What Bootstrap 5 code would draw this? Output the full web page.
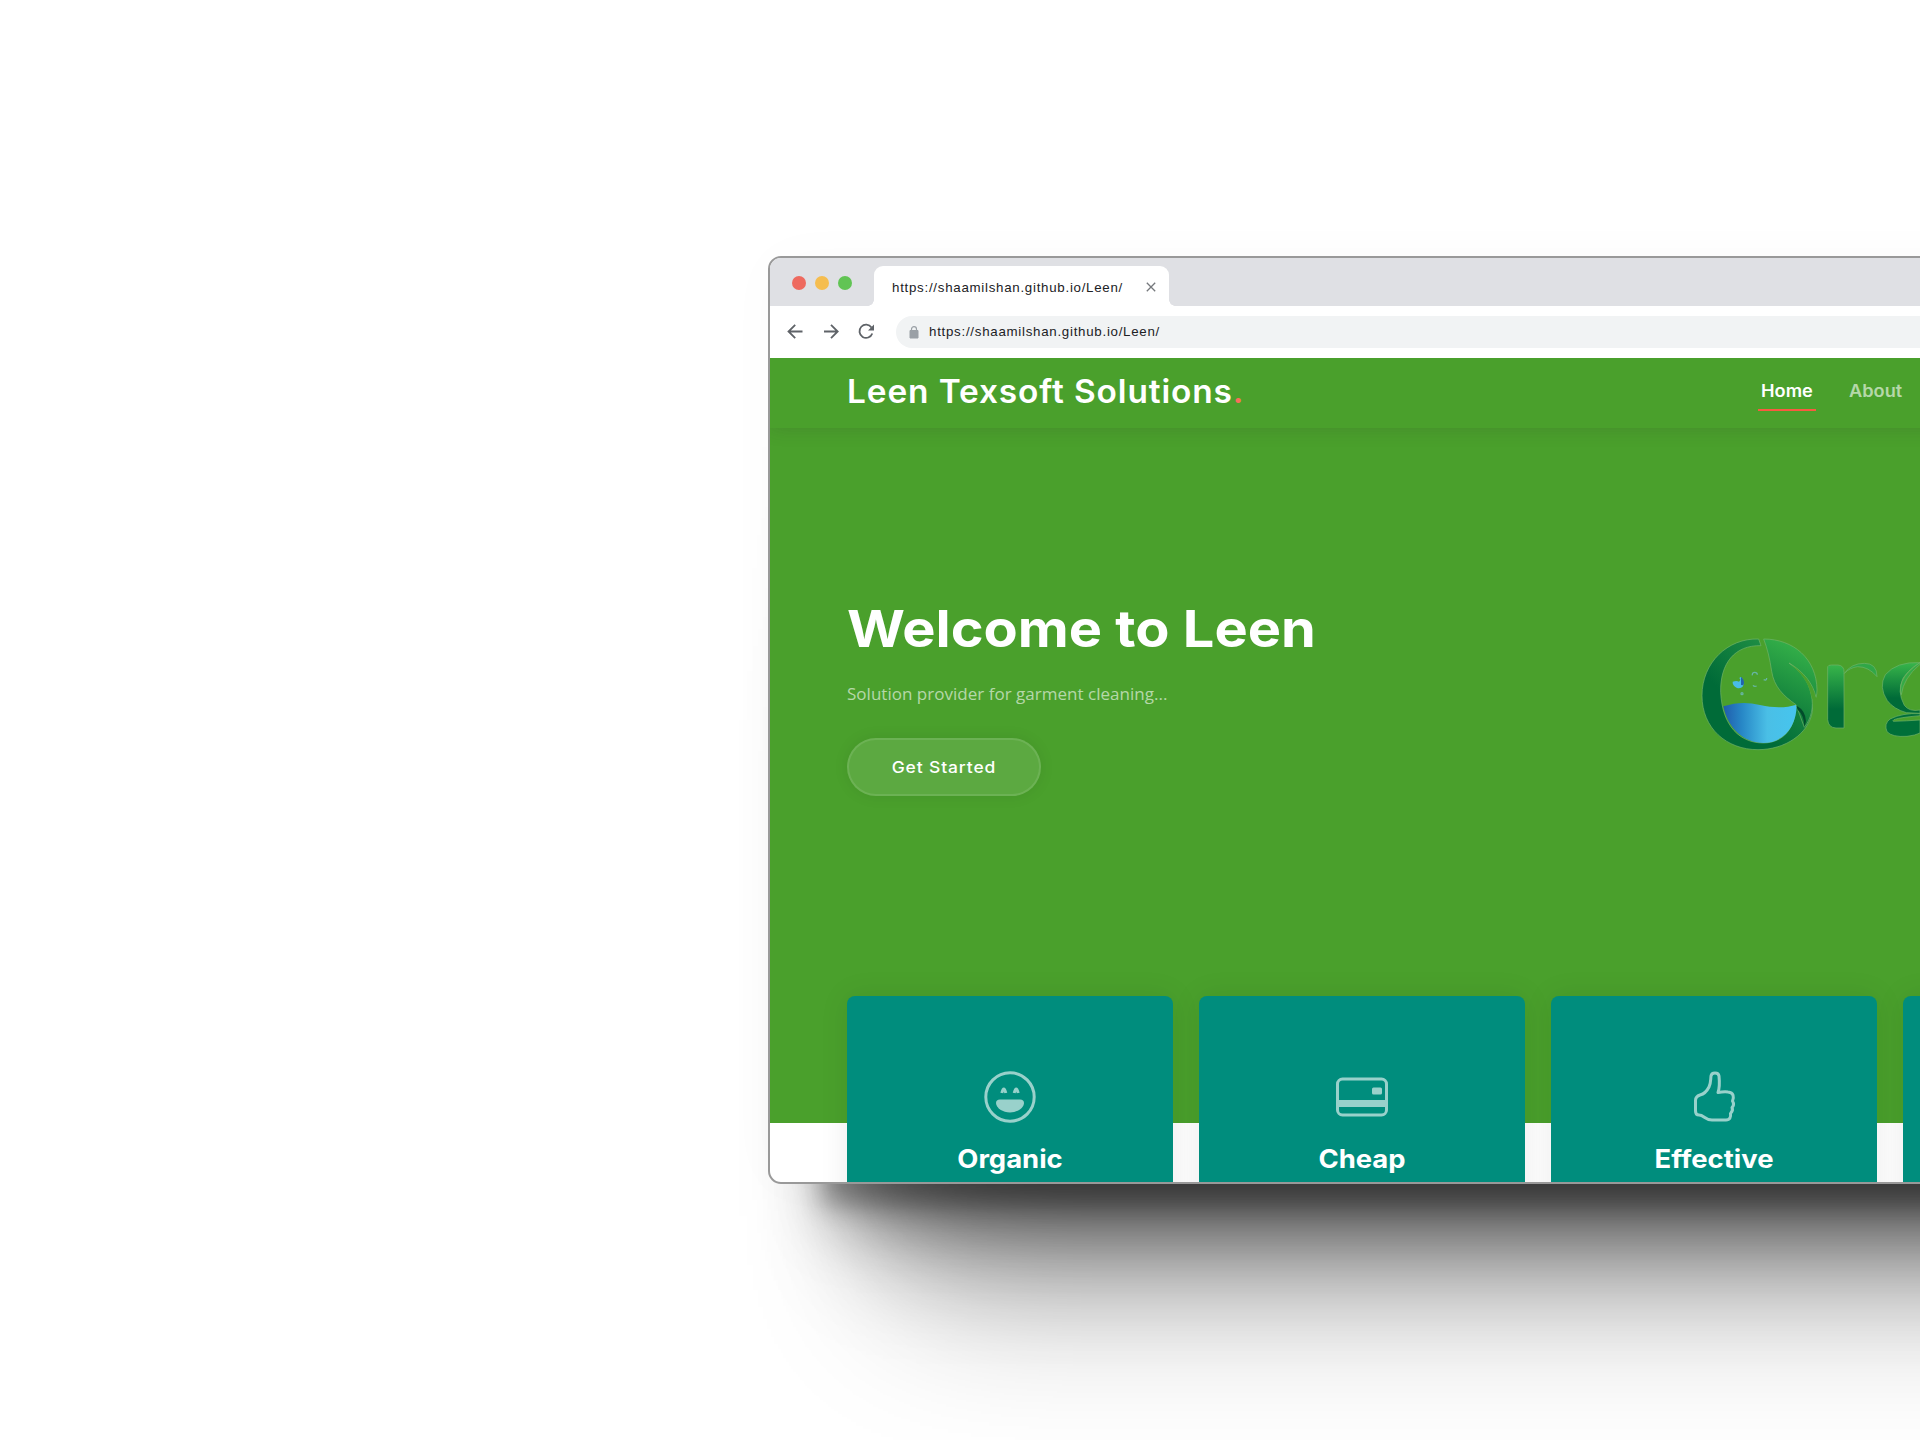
<!DOCTYPE html>
<html lang="en">
<head>
<meta charset="utf-8">
<meta name="viewport" content="width=device-width, initial-scale=1">
<title>Leen Texsoft Solutions</title>
<link href="https://cdn.jsdelivr.net/npm/bootstrap@5.3.0/dist/css/bootstrap.min.css" rel="stylesheet">
<style>
html,body{height:1440px;overflow:hidden;background:#fff}
.stage{width:1920px;height:1440px;padding:256px 0 0 768px;overflow:hidden}
.browser{width:1540px;height:928px;border:2px solid #999;border-radius:13px;overflow:hidden;background:#fff}
.halo{width:1540px;border-radius:13px;box-shadow:0 0 60px rgba(0,0,0,.02),0 75px 24px -54px rgba(0,0,0,.3),0 103px 60px -67px rgba(0,0,0,.36),0 164px 100px -98px rgba(0,0,0,.33),0 248px 150px -142px rgba(0,0,0,.32)}
.tabstrip{height:48px;background:#dfe0e4;padding:8px 0 0 22px}
.lights{gap:9px;padding-top:10px}
.light{width:14px;height:14px;border-radius:50%}
.tabitem{width:295px;height:40px;background:#fff;border-radius:9px 9px 0 0;margin-left:22px;padding:2px 13px 0 18px;position:relative}
.tabitem .url{padding-top:2px}
.tabitem::before,.tabitem::after{content:"";position:absolute;bottom:0;width:6px;height:6px}
.tabitem::before{left:-6px;background:radial-gradient(circle at 0 0,transparent 5.5px,#fff 6px)}
.tabitem::after{right:-6px;background:radial-gradient(circle at 100% 0,transparent 5.5px,#fff 6px)}
.url{font:13.3px/1 "Liberation Sans",Arial,sans-serif;color:#202124;letter-spacing:.73px;white-space:nowrap}
.toolbar{height:52px;padding:0 0 1px 16px}
.addr{height:32px;background:#f1f3f4;border-radius:16px 0 0 16px;margin:1px 0 0 22px;padding-left:13px}
.addr .url{margin-left:10px}
.brandfont{font-family:Inter,"Noto Sans",sans-serif}
.wide{display:inline-block;transform-origin:0 50%}
.site{height:765px;background:#4aa02c;clip-path:inset(0 0 -100px 0)}
.site-head{height:70px;padding-left:77px;box-shadow:0 0 18px rgba(50,50,50,.2);position:relative}
.logo-text{font-size:32px;font-weight:600;letter-spacing:.85px;color:#fff;white-space:nowrap;line-height:1;width:894px;padding-bottom:3px}
.logo-text .wide{transform:scaleX(1.044)}
.logo-dot{color:#f96f59}
.site-nav{gap:33px;margin-left:17px}
.navitem{font-size:17px;font-weight:600;line-height:1;color:rgba(255,255,255,.6);height:36px;padding-top:8px}
.navitem .wide{transform:scaleX(1.07)}
.navitem.on{color:#fff;width:58px;border-bottom:2px solid #f85a40;padding-left:3px}
.hero{height:568px;padding:0 0 0 77px}
.hero-copy{width:855px;padding-top:171px}
.hero h1{font-size:51px;font-weight:700;color:#fff;line-height:60px;white-space:nowrap;margin:0 0 20px}
.hero h1 .wide{transform:scaleX(1.096)}
.hero p{font:17px/30px "Open Sans",sans-serif;letter-spacing:.02px;color:rgba(255,255,255,.6);margin:0 0 29px}
.startbtn{width:194px;height:58px;border-radius:29px;border:2px solid rgba(255,255,255,.1);background:rgba(255,255,255,.1);color:#fff;font-size:16px;font-weight:500;box-shadow:0 0 15px rgba(0,0,0,.08);letter-spacing:.8px}
.startbtn .wide{transform:scaleX(1.09);transform-origin:50% 50%}
.orglogo{margin:182px 0 0 -22px}
.features{padding-left:77px;gap:26px}
.feature{width:326px;height:300px;flex:none;background:#008d7d;border-radius:8px 8px 0 0;box-shadow:0 0 30px rgba(0,0,0,.08);padding-top:75px;color:#fff}
.feature h4{font-size:25.5px;font-weight:700;line-height:30px;margin:21px 0 0;color:#fff;transform:scaleX(1.075)}
</style>
</head>
<body>
<div class="stage"><div class="halo"><div class="browser">
  <div class="tabstrip d-flex">
    <div class="lights d-flex"><i class="light" style="background:#ee6a5f"></i><i class="light" style="background:#f5bd4f"></i><i class="light" style="background:#61c454"></i></div>
    <div class="tabitem d-flex align-items-center justify-content-between"><span class="url">https://shaamilshan.github.io/Leen/</span>
      <svg width="10" height="10" viewBox="0 0 10 10" stroke="#75787c" stroke-width="1.3"><path d="M.8.8l8.400 8.400M9.200.8L.8 9.200"/></svg></div>
  </div>
  <div class="toolbar d-flex align-items-center">
    <svg width="88" height="18" viewBox="0 0 88 18" fill="none" stroke="#5f6368" stroke-width="1.8" class="flex-shrink-0">
      <path d="M16.500 8.500H3M9.200 1.800L2.500 8.500l6.700 6.700M38 8.500h13.500M45 1.800l6.700 6.700-6.700 6.700"/>
      <path d="M85.500 4.500A6.600 6.600 0 1 0 86.300 10.500"/><path d="M88 1.500v6h-6z" fill="#5f6368" stroke="none"/></svg>
    <div class="addr d-flex align-items-center flex-grow-1">
      <svg width="10" height="13" viewBox="0 0 10 13"><path d="M1 4.500h8v7.500H1z" fill="#9aa0a6" stroke="#9aa0a6" stroke-linejoin="round"/><path d="M2.500 5V3.200a2.500 2.500 0 0 1 5 0V5" fill="none" stroke="#9aa0a6" stroke-width="1.200"/></svg>
      <span class="url">https://shaamilshan.github.io/Leen/</span>
    </div>
  </div>
  <main class="site brandfont">
    <header class="site-head d-flex align-items-center">
      <div class="logo-text"><span class="wide">Leen Texsoft Solutions<span class="logo-dot">.</span></span></div>
      <nav class="site-nav d-flex align-items-center"><span class="navitem on"><span class="wide">Home</span></span><span class="navitem"><span class="wide">About</span></span></nav>
    </header>
    <section class="hero d-flex">
      <div class="hero-copy">
        <h1><span class="wide">Welcome to Leen</span></h1>
        <p>Solution provider for garment cleaning...</p>
        <button class="startbtn p-0 d-block"><span class="wide">Get Started</span></button>
      </div>
      <svg width="240" height="160" viewBox="0 0 720 480" class="orglogo flex-shrink-0">
        <defs>
          <linearGradient id="ring" x1=".7" y1="0" x2=".2" y2=".5"><stop stop-color="#259546"/><stop offset="1" stop-color="#006b38"/></linearGradient>
          <linearGradient id="leaf" x1=".7" y1="0" x2=".4" y2="1"><stop stop-color="#38b54a"/><stop offset="1" stop-color="#087339"/></linearGradient>
          <linearGradient id="water"><stop stop-color="#205cac"/><stop offset=".25" stop-color="#2787c6"/><stop offset=".6" stop-color="#4abfe6"/><stop offset="1" stop-color="#46c5ee"/></linearGradient>
          <linearGradient id="stem" x2="0" y2="1"><stop stop-color="#38b54a"/><stop offset=".7" stop-color="#006b38"/></linearGradient>
        </defs>
        <g stroke="#72b36a" stroke-width="2">
        <path fill="url(#ring)" d="M236 87C143 84 66 158 66 257C66 354 139 419 234 419C315 419 386 372 397 305C400 273 386 262 347 284C348 353 310 399 250 399C181 399 127 350 122 247C120 160 164 105 243 107Z"/>
        <path fill="url(#water)" stroke="none" d="M130 289C171 276 203 276 240 285C282 294 317 294 350 284C350 349 310 399 250 399C193 399 144 356 130 289Z"/>
        <path fill="url(#leaf)" d="M251 87C340 87 410 146 411 240Q411 252 408 262C400 223 372 185 327 159C359 183 386 211 394 255C402 291 394 325 373 352L348 284C309 257 282 229 275 184Q267 128 251 87Z"/>
        </g>
        <path fill="#4aa02c" d="M333 164C372 188 399 223 407 264L396 266C388 220 364 188 333 164Z"/>
        <path fill="#024c2b" d="M350 287Q377 302 378 334L373 350Q373 317 352 298Z"/>
        <path fill="#49bce8" d="M158 215q12-4 19 0q4-3 4-8q-7-2 2-6q12 13 6 28q-7 8-18 5q-14-7-13-19"/><path fill="#2264ad" d="M183 200q14 14 7 26l-7-1z"/>
        <g fill="none" stroke="#67b5a2" stroke-width="4"><path d="M217 196q-1-9 7-9q8 0 8 7M219 226q4 5 11 2M251 209q9 4 9-5"/><circle cx="186" cy="251" r="3"/></g>
        <g stroke="#72b36a" stroke-width="2">
        <path fill="url(#stem)" d="M443 170Q445 165 454 165H474Q493 167 492 187V354H468Q445 353 443 329Z"/>
        <path fill="#30a747" d="M493 190Q514 160 553 160Q591 160 591 200Q566 170 533 170Q509 173 493 190Z"/>
        <path fill="url(#stem)" d="M720 158Q650 154 616 194Q595 231 622 272Q641 297 679 308L720 310V300Q688 306 673 286Q650 244 669 205Q687 177 720 158Z"/>
        <path d="M720 158Q678 185 666 215Q658 240 664 254Q670 205 720 163Z" fill="#35aa45"/>
        <path fill="#006f39" d="M720 311Q669 308 630 327Q611 342 621 365Q636 382 681 379Q707 376 720 369V330Q678 333 640 334Q630 325 720 317Z"/>
        </g>
      </svg>
    </section>
    <section class="features d-flex position-relative">
      <article class="feature text-center"><svg width="52" height="52" viewBox="0 0 52 52" fill="none" stroke="#99d1cb" stroke-width="3"><circle cx="26" cy="26" r="24.200"/><path d="M16 28.500h20q4 0 4 3.500c0 5-7 9.500-14 9.500S12 37 12 32q0-3.500 4-3.500" fill="#99d1cb" stroke="none"/><path d="M17.800 22q2-8 4 0M30.200 22q2-8 4 0"/></svg><h4>Organic</h4></article>
      <article class="feature text-center"><svg width="52" height="52" viewBox="0 0 52 52" fill="none" stroke="#99d1cb" stroke-width="3"><rect x="1.500" y="8" width="49" height="36" rx="5"/><path d="M2 32.500h48" stroke-width="7"/><rect x="36" y="16.500" width="10" height="7" rx="1.500" fill="#99d1cb" stroke="none"/></svg><h4>Cheap</h4></article>
      <article class="feature text-center"><svg width="52" height="52" viewBox="0 0 52 52" fill="none" stroke="#99d1cb" stroke-width="3" stroke-linejoin="round"><path d="M30 21.500C32 16 31.500 10 31 5c-.5-4-7.500-4-8 0-.5 4 0 7-2 11-2 4-5 7-9 8-3 1-4.500 3-4.500 5.500V40c0 3 1 4 3.500 4 5 0 6 5 13 5h14c4 0 5-3 4.500-6.500 2-2 2.500-4 1.500-6 2-2 2-4 .5-6.500C46 26 46 21.500 40 21c-4-.5-7 0-10 .5z"/></svg><h4>Effective</h4></article>
      <article class="feature"></article>
    </section>
  </main>
</div></div></div>
<script src="https://cdn.jsdelivr.net/npm/bootstrap@5.3.0/dist/js/bootstrap.bundle.min.js"></script>
</body>
</html>
